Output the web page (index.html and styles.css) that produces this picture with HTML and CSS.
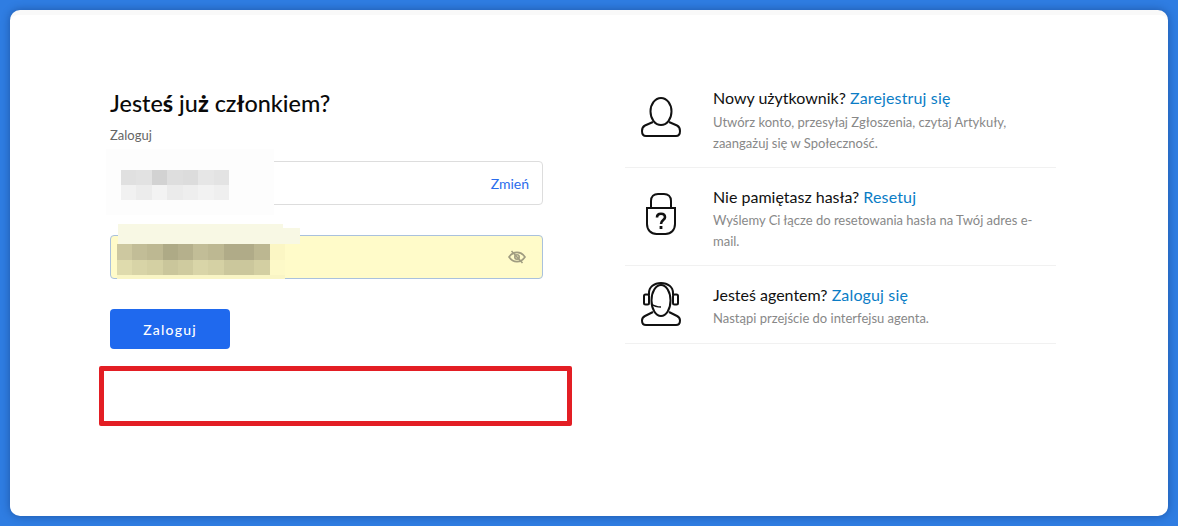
FILE: index.html
```html
<!DOCTYPE html>
<html lang="pl">
<head>
    <meta charset="UTF-8">
    <meta name="viewport" content="width=device-width, initial-scale=1.0">
    <title>Zaloguj</title>
    <link rel="stylesheet" href="styles.css">
</head>
<body>
    <div class="card">
        <div class="columns">
            <div class="login">
                <h1>Jeste<b>ś</b> ju<b>ż</b> cz<b>ł</b>onkiem?</h1>
                <p class="subtitle">Zaloguj</p>
                <div class="field">
                    <a class="change" href="#">Zmień</a>
                </div>
                <div class="field field-filled">
                    <svg class="eye" width="18" height="14" viewBox="0 0 18 14" fill="none" stroke="#a09c80" stroke-width="1.6">
                        <path d="M1 7c2-3 5-4.600 8-4.600S15 4 17 7c-2 3-5 4.600-8 4.600S3 10 1 7z"/>
                        <circle cx="9" cy="7" r="2.200"/>
                        <path d="M3.500 1l11 12"/>
                    </svg>
                </div>
                <button class="submit">Zaloguj</button>
            </div>

            <div class="help">
                <div class="help-row">
                    <div class="help-icon icon-user">
                        <svg width="40" height="40" viewBox="0 0 40 40" fill="none" stroke="#111" stroke-width="2">
                            <ellipse cx="20" cy="14.500" rx="10.500" ry="13.500"/>
                            <path d="M12 25L4 28.500C2 29.500 1 31 1 34C1 37 2.500 39 5 39H35C37.500 39 39 37 39 34C39 31 38 29.500 36 28.500L28 25"/>
                        </svg>
                    </div>
                    <div class="help-text">
                        <div class="help-title">Nowy użytkownik? <a href="#">Zarejestruj się</a></div>
                        <p>Utwórz konto, przesyłaj Zgłoszenia, czytaj Artykuły, zaangażuj się w Społeczność.</p>
                    </div>
                </div>
                <div class="help-row">
                    <div class="help-icon icon-lock">
                        <svg width="30" height="42" viewBox="0 0 30 42" fill="none" stroke="#111" stroke-width="2">
                            <path d="M5 15V8C5 3.500 8 1 12 1H18C22 1 25 3.500 25 8V15"/>
                            <path d="M1 15H29V31C29 37 25 41 19.500 41H10.500C5 41 1 37 1 31Z"/>
                            <path d="M11 24.500C11 22 12.800 20.700 15 20.700S19 22 19 24.200C19 27.200 15 27 15 31" stroke-width="2.600"/>
                            <path d="M15 33V36" stroke-width="2.800"/>
                        </svg>
                    </div>
                    <div class="help-text">
                        <div class="help-title">Nie pamiętasz hasła? <a href="#">Resetuj</a></div>
                        <p>Wyślemy Ci łącze do resetowania hasła na Twój adres e-mail.</p>
                    </div>
                </div>
                <div class="help-row">
                    <div class="help-icon icon-agent">
                        <svg width="40" height="44" viewBox="0 0 40 44" fill="none" stroke="#111" stroke-width="2">
                            <ellipse cx="20" cy="18.500" rx="9.500" ry="15.500"/>
                            <path d="M8 13V11C8 5 13 1 20 1S32 5 32 11V13"/>
                            <rect x="3" y="12.500" width="5" height="10" rx="1.500"/>
                            <rect x="32" y="12.500" width="5" height="10" rx="1.500"/>
                            <path d="M10.500 22C13 24 16 25 20 25" stroke-width="1.600"/>
                            <path d="M12 30L4 34C2 35 1 36.500 1 38.500C1 41 2.500 43 5 43H35C37.500 43 39 41 39 38.500C39 36.500 38 35 36 34L28 30"/>
                        </svg>
                    </div>
                    <div class="help-text">
                        <div class="help-title">Jesteś agentem? <a href="#">Zaloguj się</a></div>
                        <p>Nastąpi przejście do interfejsu agenta.</p>
                    </div>
                </div>
            </div>
        </div>

        <!-- blurred out account data and the red marker lie over the form -->
        <div class="mask mask-email">
            <div class="mosaic email-top"></div>
            <div class="mosaic email-bottom"></div>
        </div>
        <div class="mask mask-pass-top"></div>
        <div class="mask mask-pass-tab"></div>
        <div class="mask mask-pass">
            <div class="mosaic pass-top"></div>
            <div class="mosaic pass-bottom"></div>
        </div>
        <div class="marker"></div>
    </div>
</body>
</html>
```

FILE: styles.css
```css
* {
  box-sizing: border-box;
  margin: 0;
  padding: 0;
}

body {
  height: 526px;
  padding: 10px;
  overflow: hidden;
  font-family: Lato, "Noto Sans", sans-serif;
  background-color: #2f7de2;
}

/* Main card */
.card {
  position: relative;
  height: 506px;
  background-color: #fff;
  border-top: 5px solid #f9f9f9;
  border-radius: 10px;
  box-shadow: 0 0 8px rgba(10, 40, 90, 0.45);
}

.columns {
  display: flex;
  padding: 72px 112px 0 100px;
}

/* Login form */
.login {
  width: 433px;
  margin-right: 82px;
  padding-top: 1px;
}

h1 {
  font-size: 23.4px;
  line-height: 30px;
  font-weight: 500;
  color: #0a0a0a;
}

h1 b {
  font-weight: 900;
}

.subtitle {
  margin-top: 9px;
  font-size: 13px;
  line-height: 16px;
  color: #666;
}

.field {
  display: flex;
  align-items: center;
  justify-content: flex-end;
  height: 44px;
  margin-top: 18px;
  padding-right: 13px;
  border: 1px solid #ddd;
  border-radius: 4px;
}

.field-filled {
  margin-top: 30px;
  background-color: #fffbc9;
  border-color: #a9c1dd;
}

.change {
  font-size: 14px;
  color: #2a6cec;
  text-decoration: none;
}

.eye {
  margin-right: 3px;
}

.submit {
  display: block;
  width: 120px;
  height: 40px;
  margin-top: 30px;
  font-family: inherit;
  font-size: 14px;
  font-weight: 500;
  letter-spacing: 1.2px;
  color: #fff;
  background-color: #1f69ee;
  border: none;
  border-radius: 4px;
}

/* Help links on the right */
.help {
  width: 431px;
}

.help-row {
  display: flex;
  padding-bottom: 13px;
  margin-bottom: 18px;
  border-bottom: 1px solid #f1f1f1;
}

.help-row:last-child {
  padding-bottom: 14px;
  margin-bottom: 0;
}

/* height 0 so that the icon does not stretch the row */
.help-icon {
  display: flex;
  justify-content: center;
  flex: none;
  width: 71px;
  height: 0;
}

.icon-user {
  margin-top: 10px;
}

.icon-lock {
  margin-top: 7.500px;
}

.icon-agent {
  margin-top: -2px;
}

.help-text {
  flex: 1;
  margin-left: 17px;
}

.help-title {
  font-size: 16px;
  line-height: 22px;
  color: #111;
}

.help-title a {
  color: #0b7dc6;
  letter-spacing: 0.15px;
  text-decoration: none;
}

.help-text p {
  margin-top: 2.500px;
  font-size: 13px;
  line-height: 21px;
  color: #888;
}

.help-row:last-child p {
  margin-top: 2px;
}

/* Overlays */
.mask {
  position: absolute;
}

.mask-email {
  left: 96px;
  top: 134px;
  width: 168px;
  height: 66px;
  padding: 21px 0 0 15px;
  background-color: #fdfdfd;
}

.mask-pass-top {
  left: 108px;
  top: 209px;
  width: 165px;
  height: 20px;
  background-color: #f8f8e4;
}

.mask-pass-tab {
  left: 273px;
  top: 213px;
  width: 17px;
  height: 16px;
  background-color: #f8f8e4;
}

.mask-pass {
  left: 107px;
  top: 229px;
  width: 168px;
  height: 35px;
  background-color: #f9f5c5;
}

.mosaic {
  height: 15px;
}

.email-top {
  width: 108px;
  background: linear-gradient(90deg, #e0e0e0 0 15px, #e2e2e2 15px 31px, #d2d2d2 31px 46px, #dedede 46px 62px, #dcdcdc 62px 77px, #e6e6e6 77px 93px, #e3e3e3 93px);
}

.email-bottom {
  width: 108px;
  background: linear-gradient(90deg, #f1f1f1 0 15px, #ececec 15px 31px, #f3f3f3 31px 46px, #ebebeb 46px 62px, #eeeeee 62px 77px, #f2f2f2 77px 93px, #efefef 93px);
}

.pass-top {
  width: 168px;
  height: 16px;
  background: linear-gradient(90deg, #cdc8a0 0 15px, #c2bd97 15px 30px, #bdb892 30px 46px, #aeaa86 46px 61px, #b5b08c 61px 76px, #c2bd97 76px 91px, #bdb892 91px 107px, #b0ab88 107px 137px, #bcb791 137px 153px, #fbf6c4 153px);
}

.pass-bottom {
  width: 168px;
  background: linear-gradient(90deg, #dfdbad 0 15px, #d8d4a7 15px 30px, #d4d0a3 30px 46px, #cac69b 46px 61px, #cfcb9f 61px 76px, #d9d5a8 76px 91px, #d5d1a4 91px 107px, #cbc79c 107px 137px, #d3cfa2 137px 153px, #fdf9c8 153px);
}

/* Red marker */
.marker {
  position: absolute;
  left: 89px;
  top: 351px;
  width: 473px;
  height: 60px;
  border: 5px solid #e31e24;
  border-radius: 2px;
}
```
